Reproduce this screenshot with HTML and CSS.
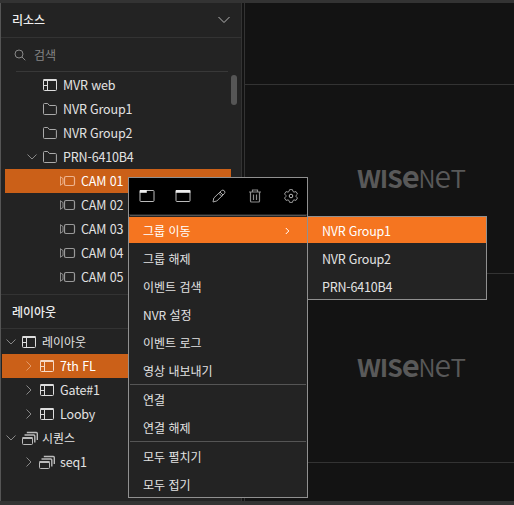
FILE: index.html
```
<!DOCTYPE html>
<html lang="ko">
<head>
<meta charset="utf-8">
<title>Wisenet Viewer</title>
<link rel="stylesheet" href="styles.css">
</head>
<body>
<svg class="defs" aria-hidden="true">
  <symbol id="layout" viewBox="0 0 16 14"><rect x="1.5" y="1.5" width="13" height="11" rx="1" fill="none" stroke="currentColor"/><path d="M1.500 1h13v2h-13z" fill="currentColor"/><path d="M5.500 2v10.500M1.500 7.500h4" fill="none" stroke="currentColor"/></symbol>
  <symbol id="folder" viewBox="0 0 16 14"><path d="M1.500 11.500v-9q0-1 1-1h3.200l1.700 2h6q1 0 1 1v7q0 1-1 1h-10.900q-1 0-1-1z" fill="none" stroke="currentColor"/></symbol>
  <symbol id="cam" viewBox="0 0 18 12"><rect x="5.500" y="1.500" width="10" height="9" rx="1.500" fill="none" stroke="currentColor" stroke-width="1.200"/><path d="M1.500 1.500v9M1.500 2l2.500 1.500v5l-2.500 1.500" fill="none" stroke="currentColor" stroke-width=".9"/></symbol>
  <symbol id="seq" viewBox="0 0 18 15"><rect x="1.500" y="6.500" width="10" height="7" rx="1" fill="none" stroke="currentColor"/><path d="M1.500 6h10v2h-10z" fill="currentColor"/><path d="M3.500 4h9.300q1 0 1 1v6.500M5.800 1.500h9.500q1 0 1 1v6.500" fill="none" stroke="currentColor" stroke-width="1.400"/></symbol>
  <symbol id="down" viewBox="0 0 12 8"><path d="M1.500 1.500l4.500 4.500 4.500-4.500" fill="none" stroke="currentColor"/></symbol>
  <symbol id="right" viewBox="0 0 8 12"><path d="M1.500 1.500l4.500 4.500-4.500 4.500" fill="none" stroke="currentColor"/></symbol>
  <symbol id="logo" viewBox="0 0 110 24">
    <g fill="currentColor" font-size="24.500" font-weight="700">
      <text x="0" y="21" textLength="24" lengthAdjust="spacingAndGlyphs">W</text>
      <text x="22.800" y="21" textLength="8.500" lengthAdjust="spacingAndGlyphs">I</text>
      <text x="30.300" y="21" textLength="15.500" lengthAdjust="spacingAndGlyphs">S</text>
      <text x="44.800" y="21" font-size="31" textLength="18" lengthAdjust="spacingAndGlyphs">e</text>
    </g>
    <g fill="currentColor" font-size="24.500" font-weight="350">
      <text x="61.500" y="21" textLength="17" lengthAdjust="spacingAndGlyphs">N</text>
      <text x="77.500" y="21" font-size="31" textLength="16.500" lengthAdjust="spacingAndGlyphs">e</text>
      <text x="93.500" y="21" textLength="15.500" lengthAdjust="spacingAndGlyphs">T</text>
    </g>
  </symbol>
</svg>
<div class="app">
  <aside class="sidebar">
    <header class="head"><span>리소스</span><svg class="head-chev" viewBox="0 0 14 8"><path d="M1.500 1l5.500 5.500 5.500-5.500" fill="none" stroke="#b5b5b5"/></svg></header>
    <div class="search"><svg class="lens" viewBox="0 0 12 12"><circle cx="5" cy="5" r="4" fill="none" stroke="#888"/><path d="M8 8l3.300 3.300" stroke="#888"/></svg><span>검색</span></div>
    <div class="tree resources">
      <div class="row lv1"><svg class="ic bright"><use href="#layout"/></svg>MVR web</div>
      <div class="row lv1"><svg class="ic"><use href="#folder"/></svg>NVR Group1</div>
      <div class="row lv1"><svg class="ic"><use href="#folder"/></svg>NVR Group2</div>
      <div class="row open"><svg class="down"><use href="#down"/></svg><svg class="ic"><use href="#folder"/></svg>PRN-6410B4</div>
      <div class="row cam active"><svg class="cam-ic"><use href="#cam"/></svg>CAM 01</div>
      <div class="row cam"><svg class="cam-ic"><use href="#cam"/></svg>CAM 02</div>
      <div class="row cam"><svg class="cam-ic"><use href="#cam"/></svg>CAM 03</div>
      <div class="row cam"><svg class="cam-ic"><use href="#cam"/></svg>CAM 04</div>
      <div class="row cam"><svg class="cam-ic"><use href="#cam"/></svg>CAM 05</div>
      <div class="scrollbar"></div>
    </div>
    <header class="head second"><span>레이아웃</span></header>
    <div class="tree layouts">
      <div class="row root"><svg class="down"><use href="#down"/></svg><svg class="ic bright"><use href="#layout"/></svg>레이아웃</div>
      <div class="row child active"><svg class="right"><use href="#right"/></svg><svg class="ic bright"><use href="#layout"/></svg>7th FL</div>
      <div class="row child"><svg class="right"><use href="#right"/></svg><svg class="ic bright"><use href="#layout"/></svg>Gate#1</div>
      <div class="row child"><svg class="right"><use href="#right"/></svg><svg class="ic bright"><use href="#layout"/></svg>Looby</div>
      <div class="row root"><svg class="down"><use href="#down"/></svg><svg class="seq-ic"><use href="#seq"/></svg>시퀀스</div>
      <div class="row child"><svg class="right"><use href="#right"/></svg><svg class="seq-ic"><use href="#seq"/></svg>seq1</div>
    </div>
  </aside>
  <main class="grid">
    <div class="tile"></div>
    <div class="tile"><svg class="logo"><use href="#logo"/></svg></div>
    <div class="tile"><svg class="logo"><use href="#logo"/></svg></div>
    <div class="tile"></div>
  </main>
</div>
<div class="menu">
  <div class="tools">
    <svg viewBox="0 0 16 14"><rect x="1" y="1.500" width="14" height="11" rx=".8" fill="none" stroke="#bbb"/><path d="M.8 1h7v2.800h-7z" fill="#eee"/></svg>
    <svg viewBox="0 0 16 14"><rect x="1" y="1.500" width="14" height="11" rx=".8" fill="none" stroke="#bbb"/><path d="M.8 1h14.500v2.800h-14.500z" fill="#eee"/></svg>
    <svg viewBox="0 0 16 14"><path d="M2 13l.8-4 7.700-7.400q1.500-1.200 2.800.2t.1 2.800l-7.500 7.300zM9 3l3 3M7.800 4.300l3 3" fill="none" stroke="#aaa"/></svg>
    <svg viewBox="0 0 16 14"><path d="M2 3h12M5.500 3v-2h5v2M3.500 3v9q0 1 1 1h7q1 0 1-1v-9M6.500 5.500v5.500M9.500 5.500v5.500" fill="none" stroke="#8c8c8c" stroke-width="1.200"/></svg>
    <svg viewBox="0 0 16 14"><path d="M6.600.6h2.800l.6 1.900 1 .6 2-.5 1.500 2.400-1.400 1.400v1.200l1.400 1.400-1.500 2.400-2-.5-1 .6-.6 1.900h-2.800l-.6-1.900-1-.6-2 .5-1.500-2.400 1.400-1.400v-1.200l-1.400-1.400 1.500-2.400 2 .5 1-.6z" fill="none" stroke="#999" stroke-linejoin="round"/><circle cx="8" cy="7" r="1.800" fill="none" stroke="#bbb"/></svg>
  </div>
  <hr class="tool-line">
  <div class="items">
    <div class="item on"><span>그룹 이동</span><svg viewBox="0 0 5 8"><path d="M.8 1l3 3-3 3" fill="none" stroke="#fff"/></svg></div>
    <div class="item">그룹 해제</div>
    <div class="item">이벤트 검색</div>
    <div class="item">NVR 설정</div>
    <div class="item">이벤트 로그</div>
    <div class="item">영상 내보내기</div>
  </div>
  <hr>
  <div class="items">
    <div class="item">연결</div>
    <div class="item">연결 해제</div>
  </div>
  <hr>
  <div class="items">
    <div class="item">모두 펼치기</div>
    <div class="item">모두 접기</div>
  </div>
</div>
<div class="submenu">
  <div class="items">
    <div class="item on">NVR Group1</div>
    <div class="item">NVR Group2</div>
    <div class="item">PRN-6410B4</div>
  </div>
</div>
</body>
</html>
```
FILE: styles.css
```
* { box-sizing: border-box; }
body {
  margin: 0;
  width: 514px;
  height: 505px;
  overflow: hidden;
  position: relative;
  background: #131313;
  color: #e2e2e2;
  font: 12px/24px "Noto Sans CJK KR", sans-serif;
}
svg { display: block; flex: none; }
.defs { display: none; }
.app {
  display: flex;
  height: 505px;
  border-top: 3px solid #333;
  border-bottom: 4px solid #333;
}
.sidebar {
  width: 242px;
  flex: none;
  background: #232323;
  border-left: 1px solid #555;
  border-right: 1px solid #333;
}
.head {
  height: 35px;
  padding: 0 10px 0 11px;
  border-bottom: 1px solid #333;
  display: flex;
  align-items: center;
  justify-content: space-between;
  font-weight: 500;
  color: #eee;
}
.head-chev { width: 14px; height: 8px; }
.search {
  height: 34px;
  margin: 0 13px 0 15px;
  border-bottom: 1px solid #383838;
  display: flex;
  align-items: center;
  color: #858585;
}
.lens { width: 12px; height: 12px; margin: 0 8px 0 -2px; }
.resources {
  position: relative;
  height: 222px;
  padding-top: 1px;
  font-size: 12.5px;
  letter-spacing: -.15px;
}
.scrollbar {
  position: absolute;
  right: 4px;
  top: 3px;
  width: 6px;
  height: 30px;
  border-radius: 3px;
  background: #555;
}
.row { display: flex; align-items: center; height: 24px; white-space: nowrap; }
.ic { width: 16px; height: 14px; margin-right: 5px; color: #aaa; }
.ic.bright { color: #ddd; }
.down { width: 12px; height: 8px; color: #888; }
.right { width: 8px; height: 12px; color: #888; }
.lv1 { padding-left: 41px; }
.open { padding-left: 25px; }
.open .ic { margin-left: 4px; }
.cam { margin: 0 10px 0 4px; padding-left: 54px; }
.cam-ic { width: 18px; height: 12px; margin-right: 4px; color: #999; }
.active { background: #cb6018; color: #fff; }
.active .cam-ic { color: #eeb48f; }
.active .right { color: #e39a69; }
.active .ic { color: #f6d9c5; }
.second { border-top: 1px solid #333; }
.layouts { padding-top: 1px; }
.root { padding-left: 4px; }
.root .ic { margin-left: 4px; }
.child { margin-left: 1px; padding-left: 23px; font-size: 12.5px; letter-spacing: -.15px; }
.child .ic { margin-left: 6px; }
.seq-ic { width: 18px; height: 15px; margin: 0 3px 0 4px; color: #bbb; }
.child .seq-ic { margin: 0 4px 0 5px; }
.grid {
  flex: 1;
  margin-left: 2px;
  border-left: 1px solid #333;
  display: grid;
  grid-template-rows: 82px 189px 189px 1fr;
}
.tile {
  border-bottom: 1px solid #333;
  padding-left: 112px;
  display: flex;
  align-items: center;
}
.tile:last-child { border-bottom: 0; }
.logo {
  width: 110px;
  height: 24px;
  color: #595959;
}
.menu {
  position: absolute;
  left: 128px;
  top: 177px;
  width: 180px;
  height: 321px;
  border: 1px solid #909090;
  background: #232323;
  color: #e2e2e2;
}
.tools {
  height: 36px;
  background: #000;
  display: flex;
  align-items: center;
  gap: 20px;
  padding-left: 10px;
}
.tools svg { width: 16px; height: 14px; }
.menu hr { height: 1px; margin: 1px; border: 0; background: #555; }
.items { display: flex; flex-direction: column; gap: 2px; }
.item {
  height: 26px;
  padding: 1px 14px 0;
  display: flex;
  align-items: center;
  justify-content: space-between;
}
.item svg { width: 5px; height: 8px; margin-right: 3px; }
.on { background: #f57520; color: #fff; }
.submenu {
  position: absolute;
  left: 307px;
  top: 216px;
  width: 180px;
  height: 84px;
  border: 1px solid #909090;
  background: #232323;
  font-size: 12.5px;
  letter-spacing: -.2px;
}
```
